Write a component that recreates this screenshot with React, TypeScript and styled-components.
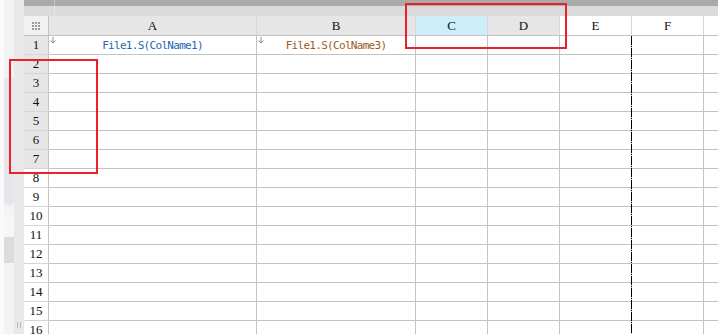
import React from 'react'
import styled, { createGlobalStyle } from 'styled-components'

const GlobalStyle = createGlobalStyle`
    html, body {
        margin: 0;
        padding: 0;
        background: #ffffff;
        overflow: hidden;
    }
`

const gridLine = '#c3c3c3'
const headLine = '#d6d6d6'

const columns = [
    { name: 'A', width: 208, bg: '#e6e6e6' },
    { name: 'B', width: 159, bg: '#e6e6e6' },
    { name: 'C', width: 72, bg: '#cdedf9' },
    { name: 'D', width: 72, bg: '#e6e6e6' },
    { name: 'E', width: 72, bg: '#ffffff' },
    { name: 'F', width: 72, bg: '#ffffff' },
    { name: '', width: 40, bg: '#ffffff' },
]

const rows = Array.from({ length: 16 }, (_, i) => i + 1)

const cells: Record<string, { text: string; color: string }> = {
    A1: { text: 'File1.S(ColName1)', color: '#2367b4' },
    B1: { text: 'File1.S(ColName3)', color: '#9c5a1e' },
}

const Frame = styled.div`
    position: relative;
    display: flex;
    width: 718px;
    height: 334px;
    overflow: hidden;
`

const SidePanel = styled.div`
    width: 10px;
    flex: none;
    display: flex;
    flex-direction: column;
    background: #f3f3f6;
    border-left: 4px solid #fafafb;
`

const Thumb = styled.div`
    margin-top: 78px;
    height: 127px;
    background: #e7e7eb;
    border-radius: 0 0 4px 4px;
`

const PanelBlock = styled.div<{ $h: number; $bg: string; $mt?: number }>`
    height: ${(p) => p.$h}px;
    margin-top: ${(p) => p.$mt ?? 0}px;
    background: ${(p) => p.$bg};
`

const Splitter = styled.div`
    width: 10px;
    flex: none;
    background: #e9e9e9;
    display: flex;
    flex-direction: column;
    justify-content: flex-end;
    align-items: center;
    padding-bottom: 6px;
    box-sizing: border-box;
`

const Grip = styled.div`
    width: 4px;
    height: 6px;
    border-left: 1px solid #b8b8b8;
    border-right: 1px solid #b8b8b8;
    box-sizing: border-box;
`

const Main = styled.div`
    flex: 1;
    display: flex;
    flex-direction: column;
    min-width: 0;
`

const TopBar = styled.div`
    height: 6px;
    flex: none;
    background: #aaaaaa;
    display: flex;
`

const TopTab = styled.div`
    width: 30px;
    border-right: 1px solid #c4c4c4;
`

const Band = styled.div`
    height: 10px;
    flex: none;
    background: #dbdbdb;
    display: flex;
`

const BandTab = styled.div`
    width: 30px;
    border-right: 1px solid #e6e6e6;
`

const Sheet = styled.div`
    display: grid;
    grid-template-columns: 25px ${columns.map((c) => `${c.width}px`).join(' ')};
    grid-template-rows: 20px;
    grid-auto-rows: 19px;
`

const Corner = styled.div`
    background: #f1f1f1;
    border-right: 1px solid ${gridLine};
    border-bottom: 1px solid ${gridLine};
    box-sizing: border-box;
    display: grid;
    place-items: center;
`

const Dots = styled.div`
    display: grid;
    grid-template-columns: repeat(3, 2px);
    grid-auto-rows: 2px;
    gap: 1px;
    span {
        background: #9b9b9b;
    }
`

const headFont = `
    font-family: 'Liberation Serif', 'Times New Roman', serif;
    font-size: 13px;
    color: #111;
`

const ColHead = styled.div<{ $bg: string }>`
    background: ${(p) => p.$bg};
    border-right: 1px solid ${headLine};
    border-bottom: 1px solid ${gridLine};
    box-sizing: border-box;
    display: flex;
    align-items: center;
    justify-content: center;
    ${headFont}
`

const RowHead = styled.div<{ $sel: boolean }>`
    background: ${(p) => (p.$sel ? '#e6e6e6' : '#ffffff')};
    border-right: 1px solid ${gridLine};
    border-bottom: 1px solid ${headLine};
    box-sizing: border-box;
    display: flex;
    align-items: center;
    justify-content: center;
    ${headFont}
`

const Cell = styled.div<{ $color?: string }>`
    position: relative;
    border-right: 1px solid ${gridLine};
    border-bottom: 1px solid ${gridLine};
    box-sizing: border-box;
    display: flex;
    align-items: center;
    justify-content: center;
    font-family: 'DejaVu Sans Mono', monospace;
    font-size: 11px;
    letter-spacing: -0.7px;
    color: ${(p) => p.$color ?? '#000'};
    white-space: nowrap;
    overflow: hidden;
`

const FlagArrow = styled.svg`
    position: absolute;
    left: 1px;
    top: 1px;
`

const PageBreak = styled.div`
    position: absolute;
    left: 631px;
    top: 36px;
    bottom: 0;
    width: 1px;
    background: repeating-linear-gradient(
        to bottom,
        #000 0 9px,
        transparent 9px 10px,
        #000 10px 11px,
        transparent 11px 12px
    );
`

const Marker = styled.div<{ $x: number; $y: number; $w: number; $h: number }>`
    position: absolute;
    left: ${(p) => p.$x}px;
    top: ${(p) => p.$y}px;
    width: ${(p) => p.$w}px;
    height: ${(p) => p.$h}px;
    border: 2px solid #e8212b;
    box-sizing: border-box;
`

const Arrow = () => (
    <FlagArrow width="6" height="7" viewBox="0 0 6 7">
        <path d="M3 0V6M0.5 3.5L3 6L5.5 3.5" stroke="#8a8a8a" strokeWidth="1" fill="none" />
    </FlagArrow>
)

export default function App() {
    return (
        <>
            <GlobalStyle />
            <Frame>
                <SidePanel>
                    <Thumb />
                    <PanelBlock $mt={10} $h={22} $bg="#f6f6f8" />
                    <PanelBlock $h={26} $bg="#dcdcdf" />
                </SidePanel>
                <Splitter>
                    <Grip />
                </Splitter>
                <Main>
                    <TopBar>
                        <TopTab />
                    </TopBar>
                    <Band>
                        <BandTab />
                    </Band>
                    <Sheet>
                        <Corner>
                            <Dots>
                                {Array.from({ length: 9 }, (_, i) => (
                                    <span key={i} />
                                ))}
                            </Dots>
                        </Corner>
                        {columns.map((c, i) => (
                            <ColHead key={i} $bg={c.bg}>
                                {c.name}
                            </ColHead>
                        ))}
                        {rows.map((r) => (
                            <React.Fragment key={r}>
                                <RowHead $sel={r <= 7}>{r}</RowHead>
                                {columns.map((c, i) => {
                                    const data = cells[`${c.name}${r}`]
                                    return (
                                        <Cell key={i} $color={data?.color}>
                                            {data && <Arrow />}
                                            {data?.text}
                                        </Cell>
                                    )
                                })}
                            </React.Fragment>
                        ))}
                    </Sheet>
                </Main>
                <PageBreak />
                <Marker $x={9} $y={59} $w={89} $h={115} />
                <Marker $x={405} $y={3} $w={162} $h={46} />
            </Frame>
        </>
    )
}
